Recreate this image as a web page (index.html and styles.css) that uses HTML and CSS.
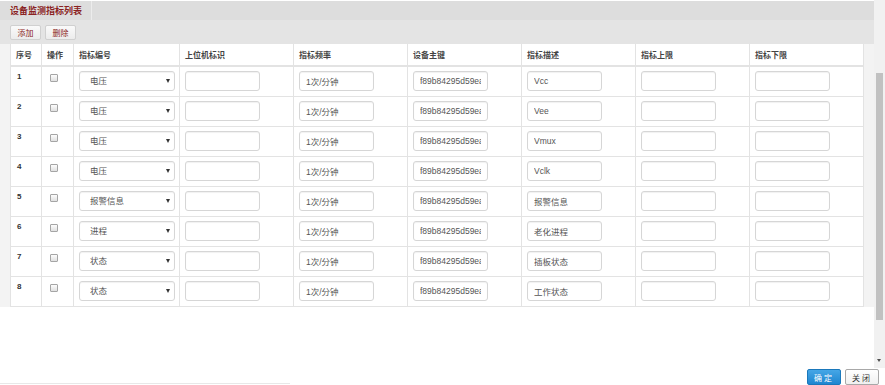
FILE: index.html
```html
<!DOCTYPE html>
<html lang="zh-CN">

<head>
    <meta charset="UTF-8">
    <meta name="viewport" content="width=device-width, initial-scale=1.0">
    <title>设备监测指标列表</title>
    <link rel="stylesheet" href="styles.css">
</head>

<body>
    <div class="page">
        <div class="frame">
            <div class="main">
                <div class="titlebar">
                    <div class="title">设备监测指标列表</div>
                </div>
                <div class="toolbar">
                    <button type="button" class="tool-btn">添加</button>
                    <button type="button" class="tool-btn">删除</button>
                </div>
                <div class="grid-wrap">
                    <table class="grid">
                        <colgroup>
                            <col style="width:31px">
                            <col style="width:32px">
                            <col style="width:106px">
                            <col style="width:114px">
                            <col style="width:114px">
                            <col style="width:114px">
                            <col style="width:114px">
                            <col style="width:114px">
                            <col style="width:114px">
                        </colgroup>
                        <thead>
                            <tr>
                                <th>序号</th>
                                <th>操作</th>
                                <th>指标编号</th>
                                <th>上位机标识</th>
                                <th>指标频率</th>
                                <th>设备主键</th>
                                <th>指标描述</th>
                                <th>指标上限</th>
                                <th>指标下限</th>
                            </tr>
                        </thead>
                        <tbody id="rows"></tbody>
                    </table>
                </div>
            </div>
            <div class="vscroll">
                <div class="thumb"></div>
                <div class="arrow"></div>
            </div>
        </div>
        <div class="footer">
            <div class="hbar"></div>
            <div class="actions">
                <button type="button" class="btn btn-ok">确定</button>
                <button type="button" class="btn btn-close">关闭</button>
            </div>
        </div>
    </div>
    <script>
        // Rows of the indicator list
        const indicators = [
            { type: '电压', desc: 'Vcc' },
            { type: '电压', desc: 'Vee' },
            { type: '电压', desc: 'Vmux' },
            { type: '电压', desc: 'Vclk' },
            { type: '报警信息', desc: '报警信息' },
            { type: '进程', desc: '老化进程' },
            { type: '状态', desc: '插板状态' },
            { type: '状态', desc: '工作状态' }
        ];
        const types = ['电压', '报警信息', '进程', '状态'];

        // Text input cell, spellcheck off so codes like Vclk are not flagged
        const field = (value = '') =>
            `<td><input type="text" class="cell-input" spellcheck="false" value="${value}"></td>`;

        const tbody = document.getElementById('rows');
        indicators.forEach((item, i) => {
            const options = types.map(t =>
                `<option${t === item.type ? ' selected' : ''}>${t}</option>`).join('');
            const tr = document.createElement('tr');
            tr.innerHTML = `
                <td class="num">${i + 1}</td>
                <td class="chk"><input type="checkbox"></td>
                <td><div class="select-box"><select>${options}</select></div></td>
                ${field()}
                ${field('1次/分钟')}
                ${field('f89b84295d59eaf0a1c3')}
                ${field(item.desc)}
                ${field()}
                ${field()}`;
            tbody.appendChild(tr);
        });
    </script>
</body>

</html>
```

FILE: styles.css
```css
* {
    box-sizing: border-box;
}

body {
    margin: 0;
    background-color: #fff;
    font-family: "Liberation Sans", "Noto Sans CJK SC", sans-serif;
    font-size: 8px;
    color: #333;
}

.page {
    width: 885px;
    height: 385px;
    display: flex;
    flex-direction: column;
    overflow: hidden;
}

.frame {
    display: flex;
    height: 370px;
}

.main {
    width: 874px;
}

.titlebar {
    height: 19px;
    margin-top: 1px;
    background-color: #dddddd;
    display: flex;
}

.title {
    width: 92px;
    padding-left: 10px;
    line-height: 20px;
    font-size: 9px;
    font-weight: bold;
    color: #8a2222;
    border-right: 1px solid #ececec;
}

.toolbar {
    height: 24px;
    background-color: #e4e4e4;
    padding: 5px 10px 0;
    display: flex;
    gap: 4px;
}

.tool-btn {
    width: 31px;
    height: 15px;
    padding: 0;
    font-family: inherit;
    font-size: 8px;
    color: #8a2222;
    background: linear-gradient(#fafafa, #ececec);
    border: 1px solid #d0d0d0;
    border-radius: 2px;
}

.grid-wrap {
    background-color: #f3f3f3;
    padding: 0 10px 0 10px;
}

.grid {
    width: 853px;
    table-layout: fixed;
    border-collapse: collapse;
    background-color: #fff;
}

.grid th,
.grid td {
    border: 1px solid #e3e3e3;
    padding: 0 0 0 5px;
    text-align: left;
}

.grid th {
    height: 22px;
    font-weight: bold;
    color: #444;
    border-top: none;
    border-bottom: 2px solid #e3e3e3;
}

.grid td {
    height: 30px;
}

.grid td.num {
    vertical-align: top;
    padding-top: 5px;
    padding-left: 6px;
    font-weight: bold;
}

.grid td.chk {
    vertical-align: top;
    padding-top: 7px;
    padding-left: 8px;
}

.chk input {
    appearance: none;
    width: 8px;
    height: 8px;
    margin: 0;
    display: block;
    border: 1px solid #a5a5a5;
    border-radius: 1px;
    background: linear-gradient(#fdfdfd, #e0e0e0);
}

.cell-input {
    display: block;
    width: 75px;
    height: 20px;
    padding: 0 6px;
    font-family: inherit;
    font-size: 8.5px;
    color: #555;
    border: 1px solid #d6d6d6;
    border-radius: 3px;
    background-color: #fff;
    box-shadow: inset 0 1px 1px rgba(0, 0, 0, 0.06);
}

.select-box {
    position: relative;
    width: 96px;
}

.select-box select {
    appearance: none;
    display: block;
    width: 96px;
    height: 20px;
    padding: 0 10px;
    font-family: inherit;
    font-size: 8.5px;
    color: #555;
    border: 1px solid #d6d6d6;
    border-radius: 3px;
    background-color: #fff;
    box-shadow: inset 0 1px 1px rgba(0, 0, 0, 0.06);
}

.select-box::after {
    content: "";
    position: absolute;
    right: 5px;
    top: 8px;
    border-left: 2px solid transparent;
    border-right: 2px solid transparent;
    border-top: 4px solid #333;
}

.vscroll {
    width: 11px;
    background-color: #f1f1f1;
    position: relative;
}

.thumb {
    position: absolute;
    left: 2px;
    width: 7px;
    top: 73px;
    height: 247px;
    background-color: #c1c1c1;
}

.arrow {
    position: absolute;
    left: 3px;
    bottom: 6px;
    border-left: 2px solid transparent;
    border-right: 2px solid transparent;
    border-top: 3px solid #505050;
}

.footer {
    position: relative;
    flex: 1;
    display: flex;
    justify-content: flex-end;
    padding: 1px 6px 0 0;
}

.hbar {
    position: absolute;
    left: 0;
    bottom: 1px;
    width: 290px;
    height: 1px;
    background-color: #e8e8e8;
}

.actions {
    display: flex;
    gap: 4px;
}

.btn {
    width: 34px;
    height: 16px;
    padding: 0;
    font-family: inherit;
    font-size: 8px;
    letter-spacing: 2px;
    border-radius: 2px;
}

.btn-ok {
    color: #fff;
    background: linear-gradient(#45a6e6, #1f86d0);
    border: 1px solid #1a78bb;
}

.btn-close {
    color: #333;
    background: linear-gradient(#fff, #f0f0f0);
    border: 1px solid #a8a8a8;
}
```
